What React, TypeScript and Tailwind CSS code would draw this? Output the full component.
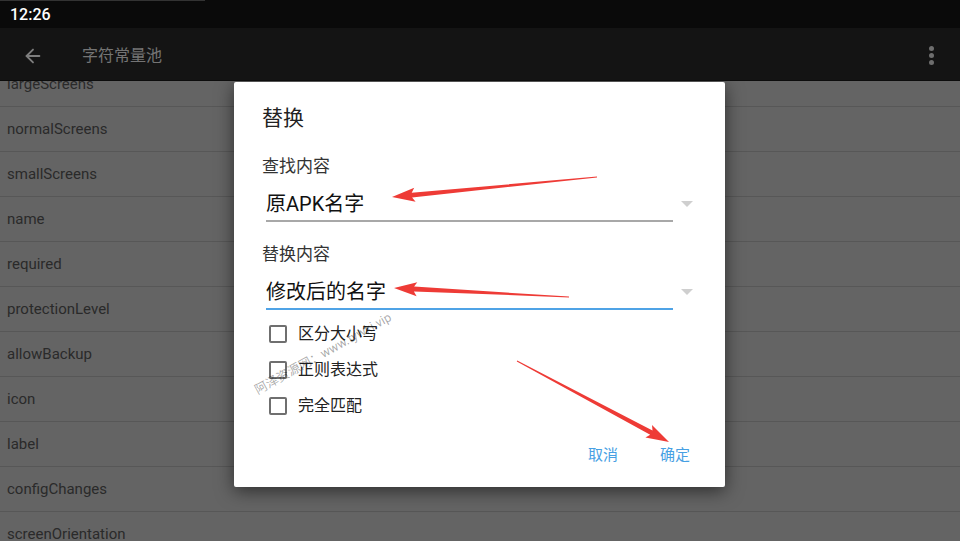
import React from 'react';
import { ArrowLeft } from 'lucide-react';

const rows = [
  'largeScreens',
  'normalScreens',
  'smallScreens',
  'name',
  'required',
  'protectionLevel',
  'allowBackup',
  'icon',
  'label',
  'configChanges',
  'screenOrientation',
];

const options = ['区分大小写', '正则表达式', '完全匹配'];

// Tapered annotation arrow: thin tail, wider shaft near the head, triangular head.
function arrowPath(tx: number, ty: number, hx: number, hy: number) {
  const dx = hx - tx;
  const dy = hy - ty;
  const len = Math.hypot(dx, dy);
  const ux = dx / len;
  const uy = dy / len;
  const nx = -uy;
  const ny = ux;
  const headLen = 20;
  const headW = 7;
  const shaftW = 2.4;
  const bx = hx - ux * headLen;
  const by = hy - uy * headLen;
  const p = (x: number, y: number) => `${x.toFixed(1)},${y.toFixed(1)}`;
  return [
    'M', p(tx + nx * 0.4, ty + ny * 0.4),
    'L', p(bx + nx * shaftW, by + ny * shaftW),
    'L', p(bx + nx * headW - ux * 3, by + ny * headW - uy * 3),
    'L', p(hx, hy),
    'L', p(bx - nx * headW - ux * 3, by - ny * headW - uy * 3),
    'L', p(bx - nx * shaftW, by - ny * shaftW),
    'L', p(tx - nx * 0.4, ty - ny * 0.4),
    'Z',
  ].join(' ');
}

function Field({ label, value, focused }: { label: string; value: string; focused?: boolean }) {
  return (
    <div className="flex flex-col">
      <div className="ml-[28px] text-[17px] leading-[22px] text-[#333]">{label}</div>
      <div className="relative ml-[32px] mt-[6px] w-[407px]">
        <div
          className={
            focused
              ? 'pt-[8px] pb-[3px] text-[20px] leading-[26px] text-[#111] border-b-2 border-[#4fa3e6]'
              : 'pt-[8px] pb-[3px] text-[20px] leading-[26px] text-[#111] border-b-2 border-[#a8a8a8]'
          }
        >
          {value}
        </div>
        <div className="absolute left-[415px] top-[18px] w-0 h-0 border-l-[6px] border-r-[6px] border-t-[6px] border-l-transparent border-r-transparent border-t-[#cfcfcf]" />
      </div>
    </div>
  );
}

export default function App() {
  return (
    <div
      className="relative w-[960px] h-[541px] overflow-hidden flex flex-col bg-[#646464]"
      style={{ fontFamily: 'Roboto, "Noto Sans CJK SC", sans-serif' }}
    >
      {/* Status bar */}
      <div className="h-[28px] shrink-0 bg-[#0a0a0a] flex flex-col">
        <div className="h-px w-[205px] bg-[#333]" />
        <div className="flex-1 flex items-center pl-[10px] text-white text-[16px] font-medium">12:26</div>
      </div>

      {/* Toolbar */}
      <div className="h-[53px] shrink-0 bg-[#141414] border-b border-[#0c0c0c] flex items-center pt-[3px] z-10">
        <ArrowLeft size={22} strokeWidth={2} className="ml-[22px] text-[#7e7e7e]" />
        <div className="ml-[38px] text-[16px] text-[#747474]">字符常量池</div>
        <div className="ml-auto mr-[26px] flex flex-col gap-[2px]">
          <span className="w-[5px] h-[5px] rounded-full bg-[#6e6e6e]" />
          <span className="w-[5px] h-[5px] rounded-full bg-[#6e6e6e]" />
          <span className="w-[5px] h-[5px] rounded-full bg-[#6e6e6e]" />
        </div>
      </div>

      {/* Dimmed list behind dialog */}
      <div className="flex-1 overflow-hidden">
        <div className="-mt-[19px] flex flex-col">
          {rows.map((r) => (
            <div
              key={r}
              className="h-[45px] shrink-0 flex items-center pl-[7px] border-b border-[#575757] text-[15px] text-[#2a2a2a]"
            >
              {r}
            </div>
          ))}
        </div>
      </div>

      {/* Replace dialog */}
      <div className="absolute left-[234px] top-[82px] w-[491px] h-[405px] bg-white rounded-[2px] shadow-[0_4px_18px_rgba(0,0,0,0.55)] flex flex-col">
        <div className="ml-[28px] pt-[22px] text-[21px] leading-[28px] text-[#222]">替换</div>
        <div className="mt-[23px]">
          <Field label="查找内容" value="原APK名字" />
        </div>
        <div className="mt-[21px]">
          <Field label="替换内容" value="修改后的名字" focused />
        </div>
        <div className="mt-[6px] flex flex-col">
          {options.map((o) => (
            <div key={o} className="h-[36px] flex items-center pl-[35px]">
              <span className="w-[18px] h-[18px] border-2 border-[#6f6f6f] rounded-[2px]" />
              <span className="ml-[11px] text-[16px] text-[#222]">{o}</span>
            </div>
          ))}
        </div>
        <div className="mt-auto mb-[21px] flex justify-end items-center gap-[42px] pr-[35px] text-[15px] text-[#47a0e3]">
          <span>取消</span>
          <span>确定</span>
        </div>
      </div>

      {/* Watermark */}
      <div className="absolute left-[256px] top-[382px] origin-left -rotate-[29deg] text-[12.5px] text-black/35 whitespace-nowrap pointer-events-none">
        阿泽资源网：www.tywki.vip
      </div>

      {/* Red annotation arrows */}
      <svg className="absolute inset-0 pointer-events-none" width={960} height={541}>
        <path d={arrowPath(597, 177, 392, 197)} fill="#ee3b36" />
        <path d={arrowPath(569, 297, 394, 288)} fill="#ee3b36" />
        <path d={arrowPath(517, 361, 669, 442)} fill="#ee3b36" />
      </svg>
    </div>
  );
}
